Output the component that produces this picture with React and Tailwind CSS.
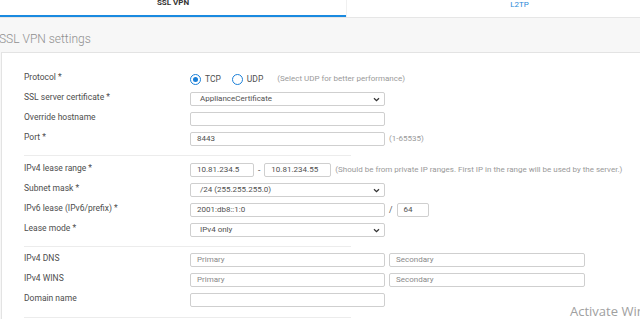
import React from "react";

const font = { fontFamily: "Roboto, 'Liberation Sans', sans-serif" };

function Chevron() {
  return (
    <svg width="7" height="5" viewBox="0 0 7 5" className="shrink-0">
      <path d="M1 1.2 L3.5 3.6 L6 1.2" fill="none" stroke="#333" strokeWidth="1.3" />
    </svg>
  );
}

function Input({ value, placeholder, className = "w-[195px]" }) {
  return (
    <div
      className={`h-[14px] border border-[#cfcfcf] rounded-[2px] bg-white flex items-center pl-[6px] text-[8px] leading-[8px] ${className}`}
    >
      {value ? (
        <span className="text-[#505050]">{value}</span>
      ) : (
        <span className="text-[#8a8a8a]">{placeholder}</span>
      )}
    </div>
  );
}

function Select({ value }) {
  return (
    <div className="h-[14px] w-[195px] border border-[#cfcfcf] rounded-[2px] bg-white flex items-center justify-between pl-[9px] pr-[4px] text-[8px] leading-[8px] text-[#505050]">
      <span>{value}</span>
      <Chevron />
    </div>
  );
}

function Radio({ checked, label }) {
  return (
    <div className="flex items-center gap-[4px]">
      <div className="w-[11px] h-[11px] rounded-full border-[1.5px] border-[#1a7fd8] flex items-center justify-center">
        {checked && <div className="w-[5px] h-[5px] rounded-full bg-[#1a7fd8]" />}
      </div>
      <span className="text-[8.5px] leading-[8px] text-[#505050]">{label}</span>
    </div>
  );
}

function Row({ label, children }) {
  return (
    <div className="flex h-[14px]">
      <div className="w-[166px] shrink-0 pt-[1px] text-[8.5px] leading-[8px] text-[#4d4d4d]">{label}</div>
      <div className="flex items-center">{children}</div>
    </div>
  );
}

function Hint({ children }) {
  return <span className="text-[8px] leading-[8px] text-[#9a9a9a] ml-[4px] whitespace-nowrap">{children}</span>;
}

function Divider({ className }) {
  return <div className={`h-px w-[327px] bg-[#ececec] ${className}`} />;
}

export default function App() {
  return (
    <div className="relative w-[640px] h-[319px] overflow-hidden bg-[#f7f7f7]" style={font}>
      {/* Tabs */}
      <div className="flex h-[18px] bg-white border-b border-[#e6e6e6] w-[692px]">
        <div className="w-[346px] shrink-0 border-b-2 border-[#1a8ae0] flex justify-center">
          <span className="text-[8px] leading-[8px] font-bold text-[#333] -mt-[1px]">SSL VPN</span>
        </div>
        <div className="w-[346px] shrink-0 border-l border-[#f0f0f0] flex justify-center">
          <span className="text-[8px] leading-[8px] text-[#2b8ad8] mt-[1px]">L2TP</span>
        </div>
      </div>

      {/* Header */}
      <div className="h-[34px] flex items-end pb-[6px]">
        <h2 className="text-[12px] leading-[14px] font-light text-[#8f8f8f] -ml-[1px]">SSL VPN settings</h2>
      </div>

      {/* Panel */}
      <div className="bg-white border-t border-l border-[#e3e3e3] ml-px w-[700px] h-[300px] pl-[22px] pt-[19px]">
        <div className="flex flex-col gap-[6px]">
          <Row label="Protocol *">
            <Radio checked label="TCP" />
            <div className="w-[11px]" />
            <Radio label="UDP" />
            <span className="text-[8px] leading-[8px] text-[#9a9a9a] ml-[14px]">
              (Select UDP for better performance)
            </span>
          </Row>
          <Row label="SSL server certificate *">
            <Select value="ApplianceCertificate" />
          </Row>
          <Row label="Override hostname">
            <Input />
          </Row>
          <Row label="Port *">
            <Input value="8443" />
            <Hint>(1-65535)</Hint>
          </Row>
        </div>

        <Divider className="mt-[9px] mb-[7px]" />

        <div className="flex flex-col gap-[6px]">
          <Row label="IPv4 lease range *">
            <Input value="10.81.234.5" className="w-[64px]" />
            <span className="text-[8.5px] leading-[8px] text-[#555] mx-[4px]">-</span>
            <Input value="10.81.234.55" className="w-[67px]" />
            <Hint>(Should be from private IP ranges. First IP in the range will be used by the server.)</Hint>
          </Row>
          <Row label="Subnet mask *">
            <Select value="/24 (255.255.255.0)" />
          </Row>
          <Row label="IPv6 lease (IPv6/prefix) *">
            <Input value="2001:db8::1:0" />
            <span className="text-[8.5px] leading-[8px] text-[#555] mx-[4px]">/</span>
            <Input value="64" className="w-[32px]" />
          </Row>
          <Row label="Lease mode *">
            <Select value="IPv4 only" />
          </Row>
        </div>

        <Divider className="mt-[9px] mb-[6px]" />

        <div className="flex flex-col gap-[6px]">
          <Row label="IPv4 DNS">
            <Input placeholder="Primary" />
            <div className="w-[4px]" />
            <Input placeholder="Secondary" className="w-[196px]" />
          </Row>
          <Row label="IPv4 WINS">
            <Input placeholder="Primary" />
            <div className="w-[4px]" />
            <Input placeholder="Secondary" className="w-[196px]" />
          </Row>
          <Row label="Domain name">
            <Input />
          </Row>
        </div>

        <Divider className="mt-[10px]" />
      </div>

      {/* Windows activation watermark */}
      <div
        className="absolute left-[570px] top-[303px] text-[13px] leading-[16px] text-[#a0a0a0] whitespace-nowrap"
        style={{ fontFamily: "'Open Sans', sans-serif" }}
      >
        Activate Windows
      </div>
    </div>
  );
}
